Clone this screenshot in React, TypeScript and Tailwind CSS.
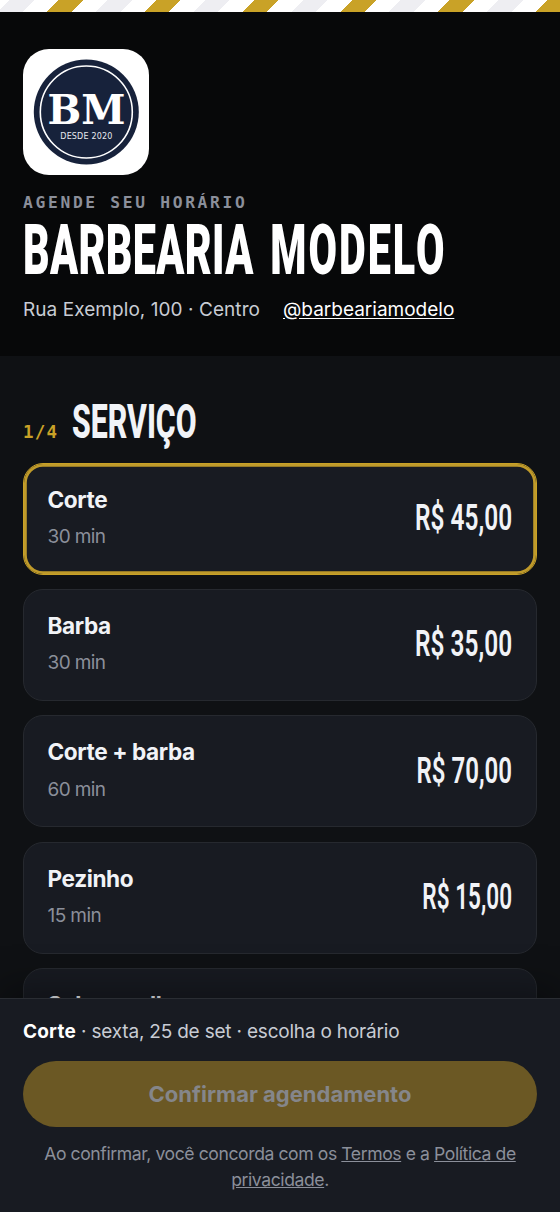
import React, { useState } from "react"

interface Service {
  id: number
  name: string
  duration: number
  price: string
  priceClass: string
}

const services: Service[] = [
  { id: 1, name: "Corte", duration: 30, price: "R$ 45,00", priceClass: "scale-x-[0.66]" },
  { id: 2, name: "Barba", duration: 30, price: "R$ 35,00", priceClass: "scale-x-[0.66]" },
  { id: 3, name: "Corte + barba", duration: 60, price: "R$ 70,00", priceClass: "scale-x-[0.65]" },
  { id: 4, name: "Pezinho", duration: 15, price: "R$ 15,00", priceClass: "scale-x-[0.61]" },
  { id: 5, name: "Sobrancelha", duration: 15, price: "R$ 20,00", priceClass: "scale-x-[0.65]" },
]

const Logo = () => (
  <svg viewBox="0 0 126 126" className="h-[126px] w-[126px] rounded-[26px] bg-white">
    <circle cx="63.3" cy="63" r="52.5" fill="#17223b" />
    <circle cx="63.3" cy="63" r="46" fill="none" stroke="#fff" strokeWidth="1.6" />
    <text
      x="63.5"
      y="75"
      textAnchor="middle"
      textLength="78"
      lengthAdjust="spacingAndGlyphs"
      fontFamily="DejaVu Serif, serif"
      fontWeight="700"
      fontSize="41"
      fill="#fff"
    >
      BM
    </text>
    <text
      x="63.3"
      y="90.3"
      textAnchor="middle"
      textLength="52"
      fontFamily="DejaVu Sans, sans-serif"
      fontSize="8"
      fill="#e8eaf0"
    >
      DESDE 2020
    </text>
  </svg>
)

const Header = () => (
  <header className="h-[344.5px] shrink-0 bg-[#070809] px-[23px] pt-[37px]">
    <Logo />
    <p className="mt-[17px] h-[22px] font-['DejaVu_Sans_Mono',monospace] text-[16.3px] leading-[22px] font-bold tracking-[2.67px] text-[#8b8f9a]">
      AGENDE SEU HORÁRIO
    </p>
    <h1 className="mt-[2px] h-[68px] w-max origin-left scale-x-[0.59] font-['Roboto',sans-serif] text-[70px] leading-[68px] font-black tracking-[0.6px] whitespace-nowrap text-white [word-spacing:10px]">
      BARBEARIA <span className="tracking-[3.4px]">MODELO</span>
    </h1>
    <div className="mt-[11px] flex gap-[23px] text-[19px] leading-[30px]">
      <span className="w-[237px] tracking-[0.06px] whitespace-nowrap text-[#c8ccd4]">
        Rua Exemplo, 100 · Centro
      </span>
      <a className="whitespace-nowrap text-white underline underline-offset-2">@barbeariamodelo</a>
    </div>
  </header>
)

const App = () => {
  const [selected, setSelected] = useState(1)

  return (
    <div className="flex h-[1212px] flex-col overflow-hidden bg-[#0f1114] font-['Inter',sans-serif] text-[#f1f3f7]">
      <div className="h-[11.5px] shrink-0 bg-[repeating-linear-gradient(-45deg,#c9a227_0_17.28px,#fff_17.28px_34.56px,#eeeef2_34.56px_51.84px,#fff_51.84px_69.12px)]" />
      <Header />
      <main className="min-h-0 flex-1 px-[23px] pt-[37px]">
        <div className="flex h-[56px] items-baseline gap-[14px]">
          <span className="w-[35px] font-['DejaVu_Sans_Mono',monospace] text-[17.5px] font-bold tracking-[1.2px] text-[#c9a227]">
            1/4
          </span>
          <h2 className="origin-left scale-x-[0.63] font-['Roboto',sans-serif] text-[48px] leading-[58px] font-extrabold">
            SERVIÇO
          </h2>
        </div>
        <div className="mt-[13.6px] flex flex-col gap-[14.4px]">
          {services.map((service) => (
            <button
              key={service.id}
              onClick={() => setSelected(service.id)}
              className={`flex h-[112px] shrink-0 items-center justify-between rounded-[20px] border bg-[#181b22] px-[23.5px] pb-[2px] text-left ${
                service.id === selected
                  ? "border-[#c9a227] shadow-[inset_0_0_0_2.8px_#bf9a2a]"
                  : "border-[#26292f]"
              }`}
            >
              <div className="pt-[1.4px]">
                <div className="text-[22.6px] leading-[34px] font-bold tracking-[-0.4px]">{service.name}</div>
                <div className="mt-[3.3px] text-[19px] leading-[34px] tracking-[-0.6px] text-[#8b8f9a]">
                  {service.duration} min
                </div>
              </div>
              <span
                className={`origin-right font-['Roboto',sans-serif] text-[37px] font-semibold ${service.priceClass}`}
              >
                {service.price}
              </span>
            </button>
          ))}
        </div>
      </main>
      <footer className="relative h-[214px] shrink-0 border-t border-[#2a2d33] bg-[#181b22] px-[23px] pt-[18px] shadow-[0_-12px_35px_rgba(0,0,0,0.35)]">
        <p className="text-[19px] leading-[30px] tracking-[-0.2px] text-[#c8ccd4]">
          <strong className="tracking-[0.2px] text-white">Corte</strong> · sexta, 25 de set · escolha o horário
        </p>
        <button className="mt-[14px] h-[66px] w-full rounded-full bg-[#6b5824] text-[22px] font-bold text-[#85868a]">
          Confirmar agendamento
        </button>
        <p className="mt-[14px] text-center text-[17.6px] leading-[26px] tracking-[-0.42px] whitespace-nowrap text-[#8b8f9a]">
          Ao confirmar, você concorda com os <a className="underline">Termos</a> e a{" "}
          <a className="underline">Política de</a>
          <br />
          <a className="underline">privacidade</a>.
        </p>
      </footer>
    </div>
  )
}

export default App
